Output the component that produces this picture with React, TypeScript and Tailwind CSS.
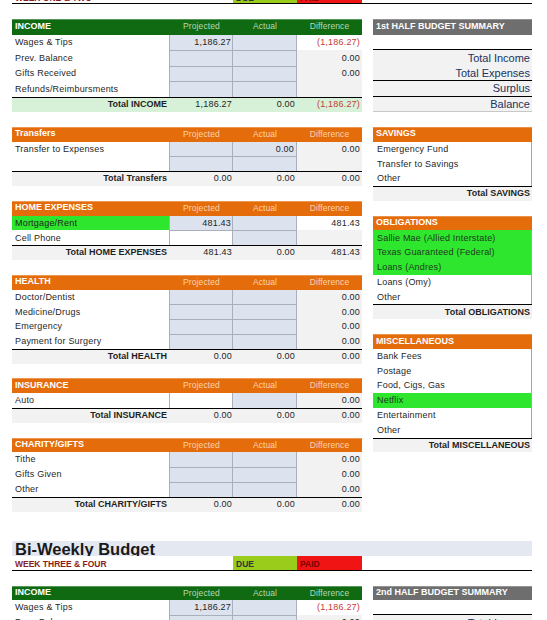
import React from "react";

const BORDER = "border-[#a9b0bc]";

function Num({ v }: { v?: string }) {
  if (!v) return null;
  const neg = v.startsWith("(");
  return <span className={neg ? "text-[#c43b3b]" : ""}>{v}</span>;
}

function SecHeader({ title, green, h }: { title: string; green?: boolean; h: string }) {
  const sub = green ? "text-[#b7d7b7]" : "text-[#fbd3b0]";
  return (
    <div
      className={`flex items-center shadow-[inset_0_1px_0_rgba(255,255,255,0.3)] ${h} ${
        green ? "bg-[#0f6a12]" : "bg-[#e46c0a]"
      }`}
    >
      <div className="w-[158px] pl-[3px] text-[9px] font-bold text-white">{title}</div>
      <div className={`w-[63px] text-center text-[8.5px] tracking-[0.1px] ${sub}`}>Projected</div>
      <div className={`w-[64px] text-center text-[8.5px] tracking-[0.1px] ${sub}`}>Actual</div>
      <div className={`w-[65px] text-center text-[8.5px] tracking-[0.1px] ${sub}`}>Difference</div>
    </div>
  );
}

type ItemProps = {
  label: string;
  proj?: string;
  act?: string;
  diff?: string;
  projWhite?: boolean;
  labelGreen?: boolean;
  first?: boolean;
  h: string;
};

function Item({ label, proj, act, diff, projWhite, labelGreen, first, h }: ItemProps) {
  const diffWhite = diff && diff !== "0.00";
  return (
    <div className={`flex ${h} text-[9px] tracking-[0.2px]`}>
      <div
        className={`w-[158px] pl-[3px] pt-[1px] flex items-center border-r ${BORDER} ${
          labelGreen ? "bg-[#2fe62f]" : "bg-white"
        }`}
      >
        {label}
      </div>
      <div
        className={`w-[63px] pr-[1px] pt-[1px] flex items-center justify-end border-r ${BORDER} ${
          first ? "" : "border-t"
        } ${projWhite ? "bg-white" : "bg-[#dce3ee]"}`}
      >
        {proj}
      </div>
      <div
        className={`w-[64px] pr-[2px] pt-[1px] flex items-center justify-end border-r ${BORDER} bg-[#dce3ee] ${
          first ? "" : "border-t"
        }`}
      >
        {act}
      </div>
      <div
        className={`w-[65px] pr-[2px] pt-[1px] flex items-center justify-end ${
          diffWhite ? "bg-white" : "bg-[#f2f2f2]"
        }`}
      >
        <Num v={diff} />
      </div>
    </div>
  );
}

function Total({
  label,
  proj,
  act,
  diff,
  green,
  h,
}: {
  label: string;
  proj: string;
  act: string;
  diff: string;
  green?: boolean;
  h: string;
}) {
  return (
    <div className={`flex ${h} text-[9px] border-t border-black ${green ? "bg-[#d6f1d8]" : "bg-[#f2f2f2]"}`}>
      <div className="w-[158px] pr-[3px] flex items-center justify-end font-bold">{label}</div>
      <div className="w-[63px] pr-[1px] flex items-center justify-end tracking-[0.2px]">{proj}</div>
      <div className="w-[64px] pr-[2px] flex items-center justify-end tracking-[0.2px]">{act}</div>
      <div className="w-[65px] pr-[2px] flex items-center justify-end tracking-[0.2px]">
        <Num v={diff} />
      </div>
    </div>
  );
}

function RHeader({ title, gray, h }: { title: string; gray?: boolean; h: string }) {
  return (
    <div
      className={`flex items-center pl-[3px] text-[9px] font-bold text-white shadow-[inset_0_1px_0_rgba(255,255,255,0.25)] ${h} ${
        gray ? "bg-[#6e6e6e]" : "bg-[#e46c0a]"
      }`}
    >
      {title}
    </div>
  );
}

function RItem({ label, green }: { label: string; green?: boolean }) {
  return (
    <div
      className={`flex items-center h-[14.8px] pl-[4px] pt-[1px] text-[9px] tracking-[0.2px] border-r border-[#a6a6a6] ${
        green ? "bg-[#2fe62f] text-[#1d3a1d]" : "bg-white"
      }`}
    >
      {label}
    </div>
  );
}

function RTotal({ label }: { label: string }) {
  return (
    <div className="flex items-center justify-end h-[14.8px] pr-[2px] text-[9px] font-bold border-t border-black bg-[#f2f2f2]">
      {label}
    </div>
  );
}

function SumRow({ label, cls }: { label: string; cls: string }) {
  return (
    <div className={`flex items-center justify-end h-[15.5px] pr-[2px] text-[11px] text-[#1a3260] bg-[#f2f2f2] ${cls}`}>
      {label}
    </div>
  );
}

function TitleRow({ text }: { text: string }) {
  return (
    <div className="h-[14.8px] w-[520px] bg-[#e4e8f1] overflow-hidden flex items-end pl-[3px]">
      <span className="text-[16.5px] leading-[13px] font-bold text-[#1a1a1a]">{text}</span>
    </div>
  );
}

function WeekRow({ text }: { text: string }) {
  return (
    <div className="h-[14.8px] w-[520px] flex border-b border-black">
      <div className="w-[221px] flex items-end pl-[3px] pb-[1px] text-[8.5px] leading-none font-bold text-[#8b1c1c]">
        {text}
      </div>
      <div className="w-[64px] bg-[#9acd1b] flex items-end pl-[3px] pb-[1px] text-[8.5px] leading-none font-bold text-[#333]">
        DUE
      </div>
      <div className="w-[65px] bg-[#f01414] flex items-end pl-[3px] pb-[1px] text-[8.5px] leading-none font-bold text-[#7a0000]">
        PAID
      </div>
    </div>
  );
}

const Blank = () => <div className="h-[14.8px]" />;

export default function App() {
  const H1 = "h-[15.5px]";
  const H2 = "h-[14.8px]";
  return (
    <div className="w-[547px] h-[620px] overflow-hidden bg-white">
      <div className="font-['Liberation_Sans',Arial,sans-serif] text-[#1f1f1f] mt-[-25.4px] pl-[12px]">
        <TitleRow text="Bi-Weekly Budget" />
        <WeekRow text="WEEK ONE & TWO" />
        <Blank />
        <div className="flex gap-[11px]">
          <div className="w-[350px] flex flex-col">
            <SecHeader title="INCOME" green h={H1} />
            <Item h={H1} first label="Wages & Tips" proj="1,186.27" diff="(1,186.27)" />
            <Item h={H1} label="Prev. Balance" diff="0.00" />
            <Item h={H1} label="Gifts Received" diff="0.00" />
            <Item h={H1} label="Refunds/Reimbursments" />
            <Total h={H1} green label="Total INCOME" proj="1,186.27" act="0.00" diff="(1,186.27)" />
            <Blank />
            <SecHeader title="Transfers" h={H2} />
            <Item h={H2} first label="Transfer to Expenses" act="0.00" diff="0.00" />
            <Item h={H2} label="" />
            <Total h={H2} label="Total Transfers" proj="0.00" act="0.00" diff="0.00" />
            <Blank />
            <SecHeader title="HOME EXPENSES" h={H2} />
            <Item h={H2} first labelGreen label="Mortgage/Rent" proj="481.43" diff="481.43" />
            <Item h={H2} projWhite label="Cell Phone" />
            <Total h={H2} label="Total HOME EXPENSES" proj="481.43" act="0.00" diff="481.43" />
            <Blank />
            <SecHeader title="HEALTH" h={H2} />
            <Item h={H2} first label="Doctor/Dentist" diff="0.00" />
            <Item h={H2} label="Medicine/Drugs" diff="0.00" />
            <Item h={H2} label="Emergency" diff="0.00" />
            <Item h={H2} label="Payment for Surgery" diff="0.00" />
            <Total h={H2} label="Total HEALTH" proj="0.00" act="0.00" diff="0.00" />
            <Blank />
            <SecHeader title="INSURANCE" h={H2} />
            <Item h={H2} first projWhite label="Auto" diff="0.00" />
            <Total h={H2} label="Total INSURANCE" proj="0.00" act="0.00" diff="0.00" />
            <Blank />
            <SecHeader title="CHARITY/GIFTS" h={H2} />
            <Item h={H2} first label="Tithe" diff="0.00" />
            <Item h={H2} label="Gifts Given" diff="0.00" />
            <Item h={H2} label="Other" diff="0.00" />
            <Total h={H2} label="Total CHARITY/GIFTS" proj="0.00" act="0.00" diff="0.00" />
          </div>
          <div className="w-[159px] flex flex-col">
            <RHeader gray title="1st HALF BUDGET SUMMARY" h={H1} />
            <div className="h-[15.5px] border-b border-black" />
            <SumRow label="Total Income" cls="" />
            <SumRow label="Total Expenses" cls="border-b border-black" />
            <SumRow label="Surplus" cls="border-b border-black" />
            <SumRow label="Balance" cls="border-b border-[#c8c8c8]" />
            <Blank />
            <RHeader title="SAVINGS" h={H2} />
            <RItem label="Emergency Fund" />
            <RItem label="Transfer to Savings" />
            <RItem label="Other" />
            <RTotal label="Total SAVINGS" />
            <Blank />
            <RHeader title="OBLIGATIONS" h={H2} />
            <RItem green label="Sallie Mae (Allied Interstate)" />
            <RItem green label="Texas Guaranteed (Federal)" />
            <RItem green label="Loans (Andres)" />
            <RItem label="Loans (Omy)" />
            <RItem label="Other" />
            <RTotal label="Total OBLIGATIONS" />
            <Blank />
            <RHeader title="MISCELLANEOUS" h={H2} />
            <RItem label="Bank Fees" />
            <RItem label="Postage" />
            <RItem label="Food, Cigs, Gas" />
            <RItem green label="Netflix" />
            <RItem label="Entertainment" />
            <RItem label="Other" />
            <RTotal label="Total MISCELLANEOUS" />
          </div>
        </div>
        <Blank />
        <Blank />
        <TitleRow text="Bi-Weekly Budget" />
        <WeekRow text="WEEK THREE & FOUR" />
        <Blank />
        <div className="flex gap-[11px]">
          <div className="w-[350px] flex flex-col">
            <SecHeader title="INCOME" green h={H2} />
            <Item h={H2} first label="Wages & Tips" proj="1,186.27" diff="(1,186.27)" />
            <Item h={H2} label="Prev. Balance" diff="0.00" />
            <Item h={H2} label="Gifts Received" diff="0.00" />
          </div>
          <div className="w-[159px] flex flex-col">
            <RHeader gray title="2nd HALF BUDGET SUMMARY" h={H2} />
            <div className="h-[14.8px] border-b border-black" />
            <SumRow label="Total Income" cls="" />
            <SumRow label="Total Expenses" cls="border-b border-black" />
          </div>
        </div>
      </div>
    </div>
  );
}
